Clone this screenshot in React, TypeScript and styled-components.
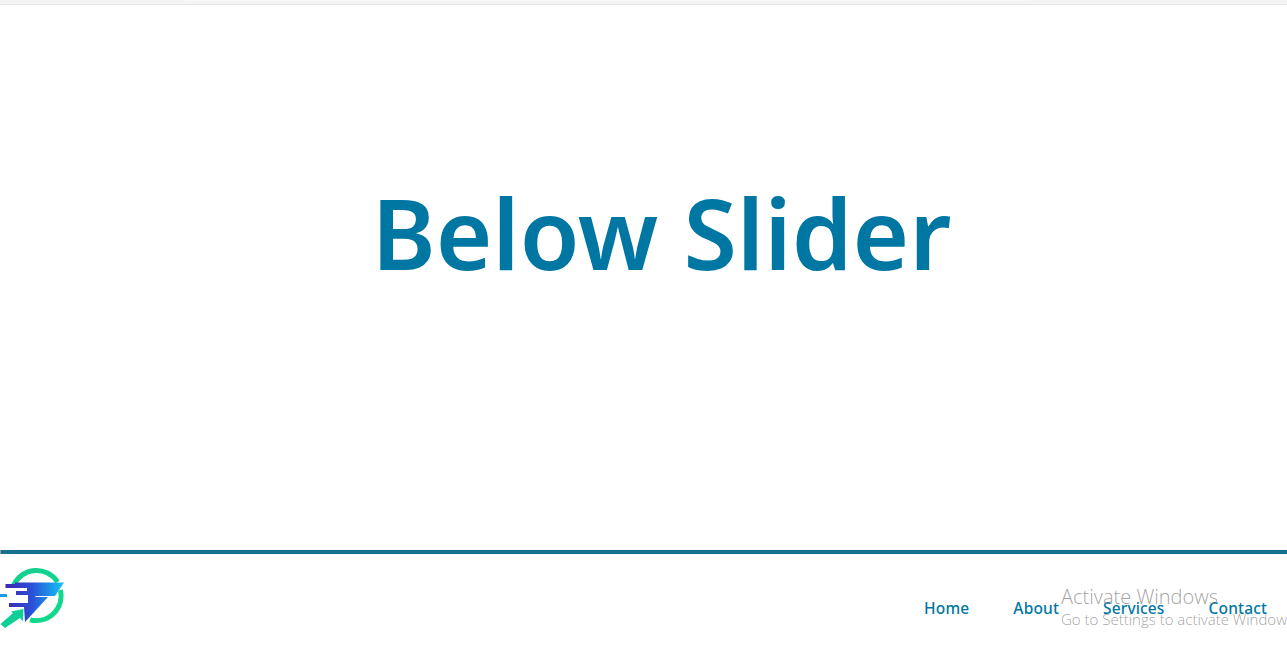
import React from 'react';
import styled, { createGlobalStyle } from 'styled-components';

const Global = createGlobalStyle`
    html, body {
        margin: 0;
        padding: 0;
        height: 100%;
        overflow: hidden;
        background: #fff;
    }
    * {
        box-sizing: border-box;
    }
`;

const links = ['Home', 'About', 'Services', 'Contact'];

const Logo: React.FC = () => (
    <svg width="68" height="66" viewBox="0 0 68 66">
        <defs>
            <linearGradient id="wing" gradientUnits="userSpaceOnUse" x1="6" y1="0" x2="64" y2="0">
                <stop offset="0" stopColor="#3b27b4" />
                <stop offset="0.45" stopColor="#2b50d8" />
                <stop offset="1" stopColor="#10c8f6" />
            </linearGradient>
        </defs>
        <path d="M13.5 21.5 A 25 25 0 0 1 57.5 18" fill="none" stroke="#14d28e" strokeWidth="5" />
        <path d="M60.5 26 A 25 25 0 0 1 30 55.8" fill="none" stroke="#12d88c" strokeWidth="5" />
        <path d="M0.5 60 L13 49 L11 47.5 L23.5 45 L23 57.5 L20 54 L5 64 Z" fill="#10cf96" />
        <path d="M15 18.5 H64 L55 32 H36 L35 33 H48 L25 58 L24 43 H9 V39 H28 V31 H16 V27 H27 V24 H5.5 V20 H15 Z" fill="url(#wing)" />
        <rect x="0" y="30" width="7" height="3" fill="#1f9be8" />
    </svg>
);

const App: React.FC = () => {
    return (
        <Page>
            <Global />
            <TopStrip>
                <TabEdge />
            </TopStrip>
            <Hero>
                <Title>Below Slider</Title>
            </Hero>
            <Rule />
            <Footer>
                <LogoWrap>
                    <Logo />
                </LogoWrap>
                <Nav>
                    {links.map((link) => (
                        <NavLink key={link}>{link}</NavLink>
                    ))}
                </Nav>
            </Footer>
            <Watermark>
                <WatermarkTitle>Activate Windows</WatermarkTitle>
                <WatermarkText>Go to Settings to activate Windows.</WatermarkText>
            </Watermark>
        </Page>
    );
};

const Page = styled.div`
    position: relative;
    width: 1287px;
    height: 658px;
    overflow: hidden;
    display: flex;
    flex-direction: column;
    background: #fff;
    font-family: 'Noto Sans', 'Open Sans', sans-serif;
    color: #0077a3;
`;

const TopStrip = styled.div`
    height: 5px;
    flex: none;
    background: #f4f4f4;
    border-bottom: 1px solid #e6e6e6;
    padding: 0 262px 0 186px;
`;

const TabEdge = styled.div`
    height: 1px;
    background: #fafafa;
`;

const Hero = styled.section`
    height: 545px;
    flex: none;
    display: flex;
    justify-content: center;
    padding: 167px 0 0 36px;
`;

const Title = styled.h1`
    margin: 0;
    font-size: 97px;
    line-height: 120px;
    font-weight: 600;
    color: #0077a3;
`;

const Rule = styled.div`
    flex: none;
    height: 4px;
    background: #17708f;
    border-left: 1px solid #999;
`;

const Footer = styled.footer`
    flex: 1;
    display: flex;
    justify-content: space-between;
    align-items: flex-start;
`;

const LogoWrap = styled.div`
    margin: 10px 0 0 0;
    height: 66px;
`;

const Nav = styled.nav`
    display: flex;
    gap: 44px;
    padding: 44px 20px 0 0;
`;

const NavLink = styled.a`
    font-size: 15.5px;
    line-height: 20px;
    font-weight: 500;
    letter-spacing: 0.15px;
    color: #0077a3;
`;

const Watermark = styled.div`
    position: absolute;
    left: 1061px;
    top: 585px;
    white-space: nowrap;
    font-family: 'Open Sans', sans-serif;
    font-weight: 300;
    color: rgba(120, 120, 120, 0.7);
    pointer-events: none;
`;

const WatermarkTitle = styled.div`
    font-size: 20px;
    line-height: 24px;
`;

const WatermarkText = styled.div`
    font-size: 15px;
    line-height: 21px;
`;

export default App;
